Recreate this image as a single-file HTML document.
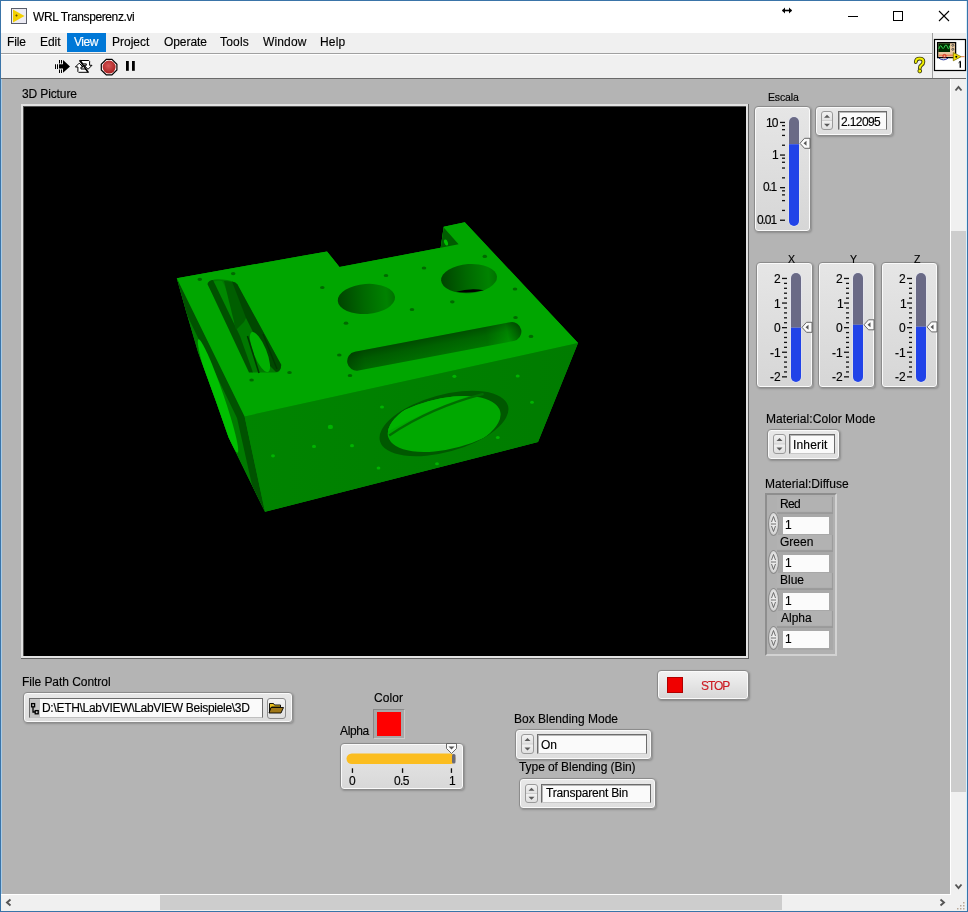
<!DOCTYPE html><html><head><meta charset="utf-8"><style>
*{margin:0;padding:0;box-sizing:border-box}
html,body{width:968px;height:912px;overflow:hidden;background:#fff}
body{position:relative;font-family:"Liberation Sans",sans-serif}
.t{position:absolute;white-space:pre;line-height:1;will-change:transform;-webkit-text-stroke:0.15px currentColor}
.a{position:absolute}
</style></head><body>
<div class="a" style="left:0;top:0;width:968px;height:912px;border:1px solid #3a74a8"></div>
<div class="a" style="left:1px;top:1px;width:966px;height:32px;background:#fff"></div>
<div class="a" style="left:1px;top:33px;width:931px;height:20px;background:#f0f0f0"></div>
<div class="a" style="left:1px;top:53px;width:931px;height:1px;background:#a0a0a0"></div>
<div class="a" style="left:1px;top:54px;width:931px;height:24px;background:#f0f0f0;border-top:1px solid #fff"></div>
<div class="a" style="left:933px;top:33px;width:34px;height:45px;background:#f0f0f0"></div>
<div class="a" style="left:932px;top:33px;width:1px;height:45px;background:#a0a0a0"></div>
<div class="a" style="left:1px;top:78px;width:966px;height:1px;background:#6a6a6a"></div>
<div class="a" style="left:1px;top:79px;width:949px;height:815px;background:#b4b4b4"></div>
<div class="a" style="left:950px;top:79px;width:1px;height:815px;background:#fff"></div>
<div class="a" style="left:951px;top:79px;width:16px;height:815px;background:#f0f0f0"></div>
<div class="a" style="left:951px;top:231px;width:15px;height:561px;background:#cdcdcd"></div>
<div class="a" style="left:1px;top:894px;width:966px;height:17px;background:#f0f0f0"></div>
<div class="a" style="left:160px;top:895px;width:622px;height:15px;background:#cdcdcd"></div>
<div class="a" style="left:1px;top:894px;width:950px;height:1px;background:#fff"></div>
<div class="a" style="left:1px;top:79px;width:1px;height:815px;background:#a8cce8"></div>
<div class="a" style="left:966px;top:1px;width:1px;height:910px;background:#d8f0fc"></div>
<div class="t" style="left:32.50px;top:10.64px;font-size:12px;letter-spacing:-0.382px;color:#000;">WRL Transperenz.vi</div>
<div class="a" style="left:67px;top:33px;width:39px;height:19px;background:#0078d7"></div>
<div class="t" style="left:7.40px;top:35.94px;font-size:12px;letter-spacing:-0.100px;color:#000;">File</div>
<div class="t" style="left:39.50px;top:35.94px;font-size:12px;letter-spacing:-0.033px;color:#000;">Edit</div>
<div class="t" style="left:74.00px;top:35.94px;font-size:12px;letter-spacing:-0.433px;color:#fff;">View</div>
<div class="t" style="left:112.40px;top:35.94px;font-size:12px;letter-spacing:0.000px;color:#000;">Project</div>
<div class="t" style="left:163.60px;top:35.94px;font-size:12px;letter-spacing:-0.067px;color:#000;">Operate</div>
<div class="t" style="left:220.30px;top:35.94px;font-size:12px;letter-spacing:0.200px;color:#000;">Tools</div>
<div class="t" style="left:263.20px;top:35.94px;font-size:12px;letter-spacing:0.140px;color:#000;">Window</div>
<div class="t" style="left:320.40px;top:35.94px;font-size:12px;letter-spacing:0.200px;color:#000;">Help</div>
<svg class="a" style="left:0;top:0" width="968" height="80" viewBox="0 0 968 80"><rect x="11.5" y="8.5" width="15" height="15" fill="#ecebf3" stroke="#5a5e6a"/><path d="M13 9.5 L24.5 16 L13 22.5 Z" fill="#f2d000"/><path d="M15.5 15.5h2M16.5 14.5v2" stroke="#6a4a00" stroke-width="1.2"/><path d="M782.5 10.5h9" stroke="#000" stroke-width="1.6"/><path d="M782 10.5l3-3v6z M792 10.5l-3-3v6z" fill="#000"/><path d="M848 16.5h10" stroke="#000" stroke-width="1"/><rect x="893.5" y="11.5" width="9" height="9" fill="none" stroke="#000"/><path d="M939 11l10 10M949 11l-10 10" stroke="#000" stroke-width="1.1"/><path d="M63 60 L70 66.4 L63 72.8 Z M59 64.2h4v4.3h-4z" fill="#000"/><path d="M59 60h1v3.5h-1zM61 60h1v3.5h-1zM59 69.5h1v3.5h-1zM61 69.5h1v3.5h-1zM55 64.2h1v4.8h-1zM57 64.2h1v4.8h-1z" fill="#000"/><g stroke="#000" stroke-width="1" fill="#fff" stroke-linejoin="miter"><path d="M80.5 60.5 L88.8 60.5 L89.6 61.3 L89.6 65.3 L92 65.3 L88 69.3 L84.2 65.3 L86.3 65.3 L86.3 63.9 L83 63.9 Z"/><path d="M87.8 72.3 L78.6 72.3 L77.9 71.6 L77.9 67 L75.4 67 L79.2 63.2 L83 67 L81 67 L81 69 L85.3 69 Z"/></g><path d="M79.5 60.2 L88.5 72.6" stroke="#000" stroke-width="1.5"/><defs><radialGradient id="ab" cx="45%" cy="40%" r="60%"><stop offset="0" stop-color="#d85858"/><stop offset="1" stop-color="#a82020"/></radialGradient></defs><path d="M106.3 59.3h5.6l5 5v5.6l-5 5h-5.6l-5-5v-5.6z" fill="#fff" stroke="#000" stroke-width="1.2"/><circle cx="109.1" cy="67.1" r="6.5" fill="url(#ab)"/><rect x="126" y="61" width="2.8" height="9.8" fill="#000"/><rect x="132" y="61" width="2.8" height="9.8" fill="#000"/><path d="M915.8 62 Q916 58.6 919.6 58.6 Q923.4 58.6 923.4 61.8 Q923.4 64 921.2 65.4 Q919.8 66.4 919.8 68.2" fill="none" stroke="#3a3a10" stroke-width="3.8" stroke-linecap="round"/><path d="M915.8 62 Q916 58.6 919.6 58.6 Q923.4 58.6 923.4 61.8 Q923.4 64 921.2 65.4 Q919.8 66.4 919.8 68.2" fill="none" stroke="#f2f000" stroke-width="2" stroke-linecap="round"/><circle cx="919.8" cy="71" r="1.9" fill="#f2f000" stroke="#3a3a10" stroke-width="0.9"/><rect x="934.5" y="39.5" width="31" height="31" fill="#fff" stroke="#000" stroke-width="1.2"/><rect x="937.6" y="42.6" width="18" height="15" fill="#e8c8a0" stroke="#000" stroke-width="1.3"/><rect x="938.3" y="43.3" width="11.7" height="8.7" fill="#002a00"/><path d="M938.8 49 Q940.3 43.5 941.8 47 Q943.3 50.5 944.8 46 Q946.3 43 947.8 48 Q948.8 50.5 949.8 45.5" fill="none" stroke="#30d050" stroke-width="1"/><circle cx="952.8" cy="45.3" r="1" fill="none" stroke="#333" stroke-width="0.8"/><circle cx="952.8" cy="49.3" r="1" fill="none" stroke="#333" stroke-width="0.8"/><path d="M939 55.2h14" stroke="#f07040" stroke-width="1.1"/><circle cx="944.5" cy="56" r="1.6" fill="none" stroke="#d02020" stroke-width="0.9"/><path d="M939 58.2 Q943.5 61.5 948 58.2" fill="none" stroke="#2030a0" stroke-width="1"/><path d="M953.3 52.6 L961.1 56.7 L953.3 60.8 Z" fill="#f4e000" stroke="#807000" stroke-width="0.8"/><circle cx="956.3" cy="56.7" r="1" fill="#000"/><path d="M961 56.7h3.5" stroke="#e07030" stroke-width="0.9"/><path d="M960.3 61.2v6.6" stroke="#000" stroke-width="1.4"/><path d="M958.6 62.8l1.7-1.6" stroke="#000" stroke-width="1"/></svg>
<svg class="a" style="left:0;top:80px" width="968" height="832" viewBox="0 80 968 832"><path d="M955.5 90.5 L958.5 87 L961.5 90.5" fill="none" stroke="#555" stroke-width="1.9"/><path d="M955.5 884.5 L958.5 888 L961.5 884.5" fill="none" stroke="#555" stroke-width="1.9"/><path d="M10.5 899.5 L7 902.5 L10.5 905.5" fill="none" stroke="#555" stroke-width="1.9"/><path d="M940.5 899.5 L944 902.5 L940.5 905.5" fill="none" stroke="#555" stroke-width="1.9"/><g fill="#b8a898"><rect x="963" y="902" width="1.5" height="1.5"/><rect x="960" y="905" width="1.5" height="1.5"/><rect x="963" y="905" width="1.5" height="1.5"/><rect x="957" y="908" width="1.5" height="1.5"/><rect x="960" y="908" width="1.5" height="1.5"/><rect x="963" y="908" width="1.5" height="1.5"/></g></svg>
<div class="t" style="left:21.90px;top:87.54px;font-size:12px;letter-spacing:-0.122px;color:#000;">3D Picture</div>
<div class="a" style="left:21px;top:104px;width:728px;height:555px;background:#e2e2e2;border-right:1px solid #606060;border-bottom:1px solid #606060"></div>
<div class="a" style="left:23px;top:106px;width:723px;height:550px;background:#000;border-left:1px solid #505050;border-top:1px solid #505050"></div>
<svg class="a" style="left:0;top:0" width="968" height="912" viewBox="0 0 968 912"><defs><linearGradient id="hg" x1="0" y1="0" x2="1" y2="0"><stop offset="0" stop-color="#004400"/><stop offset="0.45" stop-color="#006800"/><stop offset="0.85" stop-color="#008200"/><stop offset="1" stop-color="#007000"/></linearGradient><linearGradient id="sg" x1="0" y1="0" x2="1" y2="0"><stop offset="0" stop-color="#004c00"/><stop offset="0.1" stop-color="#006000"/><stop offset="0.8" stop-color="#006c00"/><stop offset="0.92" stop-color="#008800"/><stop offset="1" stop-color="#005000"/></linearGradient><linearGradient id="sv" x1="0" y1="0" x2="0" y2="1"><stop offset="0" stop-color="#000" stop-opacity="0.25"/><stop offset="0.45" stop-color="#000" stop-opacity="0.05"/><stop offset="1" stop-color="#00ff00" stop-opacity="0.06"/></linearGradient><linearGradient id="ffg" x1="0" y1="0" x2="1" y2="0"><stop offset="0" stop-color="#008400"/><stop offset="1" stop-color="#007c00"/></linearGradient><clipPath id="lf"><path d="M176.8 278.3 L244.6 416.4 L265 511.8 L228.6 437.6 L216 401.6 L198 352 L186 311 Z"/></clipPath><clipPath id="fho"><ellipse cx="0" cy="0" rx="66.4" ry="28.6"/></clipPath><clipPath id="fh2"><ellipse cx="-9" cy="3" rx="66.4" ry="28.6"/></clipPath><clipPath id="fh3"><ellipse cx="9" cy="-2" rx="66.4" ry="28.6"/></clipPath></defs><path d="M176.8 278.3 L327 251.4 L339.5 267 L440.7 247.8 L443.7 226.7 L464.8 222.3 L578 343 L538 442 L265 511.8 L228.6 437.6 L216 401.6 L198 352 L186 311 Z" fill="#009800"/><path d="M176.8 278.3 L327 251.4 L339.5 267 L440.7 247.8 L443.7 226.7 L464.8 222.3 L578 343 L244.6 416.4 Z" fill="#00a600"/><path d="M443.7 227.5 L458.6 244.2 L440.7 247.8 Z" fill="#005c00"/><ellipse cx="446" cy="242.5" rx="1.8" ry="3.2" fill="#00c000" transform="rotate(-20 446 242.5)"/><path d="M244.6 416.4 L578 343 L538 442 L265 511.8 Z" fill="url(#ffg)"/><g clip-path="url(#lf)"><rect x="170" y="270" width="100" height="250" fill="#007a00"/><path d="M176.8 278.3 L244.6 416.4 L265 511.8 L258 511.8 L237 418 L169 278 Z" fill="#005200"/><ellipse cx="218" cy="396" rx="5.5" ry="60" fill="#00c000" transform="rotate(-19 218 396)"/></g><ellipse cx="366.4" cy="299" rx="28.7" ry="15" fill="url(#hg)" transform="rotate(-4 366 299)"/><ellipse cx="469" cy="278.6" rx="28" ry="14.6" fill="url(#hg)" transform="rotate(-4 469 278)"/><path d="M456 291.8 Q470 287.5 484 290.2 Q470 293.8 456 291.8Z" fill="#000"/><g transform="translate(434.3 346.4) rotate(-10.8)"><rect x="-88.5" y="-9.5" width="177" height="19" rx="9.5" fill="url(#sg)"/><rect x="-88.5" y="-9.5" width="177" height="19" rx="9.5" fill="url(#sv)"/></g><path d="M207.5 284 Q211 278 222 279.5 Q233 280 237 284.5 L281.2 364.7 Q281 373 274 372.6 L252.9 372.6 Z" fill="#007800"/><path d="M210 284 Q214 280 222 281 L238 312 L232 328 Z" fill="#008800"/><path d="M207.5 284 Q209 280 213 280 L240 336 L253 372.6 L249 372.6 Z" fill="#005000"/><path d="M224 281 Q233 281 237 284.5 L250 310 L244 322 L236 330 Z" fill="#005e00"/><path d="M232 281.5 Q236 282 237.5 284.5 L281.2 364.7 Q281 372 276 372 L270 366 L246 318 Z" fill="#004800"/><ellipse cx="260" cy="352" rx="6.5" ry="21.5" fill="#00b000" transform="rotate(-22 260 352)"/><path d="M247.5 336 L259 373" stroke="#003800" stroke-width="1.6"/><path d="M263 334 L277 369" stroke="#003800" stroke-width="1.4"/><ellipse cx="386" cy="275.5" rx="2.3" ry="1.6" fill="#006a00"/><ellipse cx="424" cy="268" rx="2.3" ry="1.6" fill="#006a00"/><ellipse cx="484.8" cy="256.4" rx="2.3" ry="1.6" fill="#006a00"/><ellipse cx="412" cy="309.5" rx="2.3" ry="1.6" fill="#006a00"/><ellipse cx="452.3" cy="301.8" rx="2.3" ry="1.6" fill="#006a00"/><ellipse cx="515" cy="289" rx="2.3" ry="1.6" fill="#006a00"/><ellipse cx="346" cy="323.2" rx="2.3" ry="1.6" fill="#006a00"/><ellipse cx="515.5" cy="317.5" rx="2.3" ry="1.6" fill="#006a00"/><ellipse cx="339.3" cy="355" rx="2.3" ry="1.6" fill="#006a00"/><ellipse cx="531" cy="336.4" rx="2.3" ry="1.6" fill="#006a00"/><ellipse cx="350" cy="375.5" rx="2.3" ry="1.6" fill="#006a00"/><ellipse cx="322.3" cy="287.5" rx="2.3" ry="1.6" fill="#006a00"/><ellipse cx="199.8" cy="279.3" rx="2.3" ry="1.6" fill="#006a00"/><ellipse cx="233.2" cy="273.6" rx="2.3" ry="1.6" fill="#006a00"/><ellipse cx="289.5" cy="372.5" rx="2.3" ry="1.6" fill="#006a00"/><ellipse cx="251.6" cy="380" rx="2.3" ry="1.6" fill="#006a00"/><ellipse cx="382" cy="407" rx="2.0" ry="1.6" fill="#00b400"/><ellipse cx="330.4" cy="426.9" rx="2.6" ry="2.2" fill="#00b400"/><ellipse cx="314" cy="446.4" rx="2.0" ry="1.6" fill="#00b400"/><ellipse cx="352" cy="445.7" rx="2.0" ry="1.6" fill="#00b400"/><ellipse cx="273" cy="455.8" rx="2.0" ry="1.6" fill="#00b400"/><ellipse cx="378.5" cy="468" rx="1.9" ry="1.5" fill="#00b400"/><ellipse cx="437" cy="463.8" rx="1.9" ry="1.5" fill="#00b400"/><ellipse cx="454.4" cy="376.3" rx="2.0" ry="1.6" fill="#00b400"/><ellipse cx="517.7" cy="376" rx="2.0" ry="1.6" fill="#00b400"/><ellipse cx="532" cy="402.3" rx="1.9" ry="1.5" fill="#00b400"/><ellipse cx="497.8" cy="437.4" rx="1.9" ry="1.5" fill="#00b400"/><g transform="translate(444 423.5) rotate(-15.4)"><ellipse cx="0" cy="0" rx="66.4" ry="28.6" fill="#005800"/><g clip-path="url(#fho)"><g clip-path="url(#fh2)"><ellipse cx="9" cy="-2" rx="66.4" ry="28.6" fill="#00a800"/></g></g><g clip-path="url(#fho)"><g clip-path="url(#fh2)"><g clip-path="url(#fh3)"><path d="M-70 -4 Q-8 -19 70 -20 L70 -40 L-70 -40 Z" fill="#00b200" transform="translate(8 -2)"/></g></g></g><path d="M-56 -3 Q-8 -19 46 -18" fill="none" stroke="#006e00" stroke-width="2.4"/></g></svg>
<div class="a" style="left:754px;top:106px;width:57px;height:126px;border:1px solid #8c8c8c;border-radius:4px;background:linear-gradient(#e6e6e6,#d6d6d6);box-shadow:inset 0 0 0 1px #fafafa,1px 1px 2px rgba(0,0,0,0.22)"></div>
<svg class="a" style="left:0;top:0" width="968" height="912" viewBox="0 0 968 912"><rect x="788.5" y="116.5" width="11" height="110" rx="5.5" fill="#e8ecff" opacity="0.7"/><clipPath id="c789"><rect x="789" y="117" width="10" height="109" rx="5"/></clipPath><g clip-path="url(#c789)"><rect x="789" y="117" width="10" height="27.19999999999999" fill="#6a6a86"/><rect x="789" y="144.2" width="10" height="81.80000000000001" fill="#2143e8"/></g><rect x="780" y="121.80" width="5" height="1.3" fill="#111"/><rect x="782" y="124.96" width="3" height="1.3" fill="#111"/><rect x="782" y="129.03" width="3" height="1.3" fill="#111"/><rect x="782" y="134.77" width="3" height="1.3" fill="#111"/><rect x="782" y="144.59" width="3" height="1.3" fill="#111"/><rect x="780" y="154.40" width="5" height="1.3" fill="#111"/><rect x="782" y="157.56" width="3" height="1.3" fill="#111"/><rect x="782" y="161.63" width="3" height="1.3" fill="#111"/><rect x="782" y="167.37" width="3" height="1.3" fill="#111"/><rect x="782" y="177.19" width="3" height="1.3" fill="#111"/><rect x="780" y="187.00" width="5" height="1.3" fill="#111"/><rect x="782" y="190.16" width="3" height="1.3" fill="#111"/><rect x="782" y="194.23" width="3" height="1.3" fill="#111"/><rect x="782" y="199.97" width="3" height="1.3" fill="#111"/><rect x="782" y="209.79" width="3" height="1.3" fill="#111"/><rect x="780" y="219.60" width="5" height="1.3" fill="#111"/><path d="M800 143.3 L804.5 138.3 L810 138.3 L810 148.3 L804.5 148.3 Z" fill="#fbfbfb" stroke="#5a5a5a" stroke-width="0.9"/><path d="M803.5 143.3 L806.5 140.8 L806.5 145.8 Z" fill="#555"/></svg>
<div class="t" style="left:765.50px;top:116.54px;font-size:12px;letter-spacing:-0.900px;color:#000;">10</div>
<div class="t" style="left:772.30px;top:149.24px;font-size:12px;letter-spacing:0.000px;color:#000;">1</div>
<div class="t" style="left:762.90px;top:181.34px;font-size:12px;letter-spacing:-1.200px;color:#000;">0.1</div>
<div class="t" style="left:757.00px;top:213.84px;font-size:12px;letter-spacing:-1.067px;color:#000;">0.01</div>
<div class="t" style="left:767.70px;top:91.91px;font-size:10.5px;letter-spacing:-0.160px;color:#000;">Escala</div>
<div class="a" style="left:815px;top:106px;width:78px;height:30px;border:1px solid #8c8c8c;border-radius:4px;background:linear-gradient(#e8e8e8,#dedede);box-shadow:inset 0 0 0 1px #fafafa,1px 1px 2px rgba(0,0,0,0.22)"></div>
<div class="a" style="left:821px;top:111px;width:12px;height:19px;border:1px solid #9a9a9a;border-radius:3px;background:linear-gradient(#f2f2f2,#e2e2e2 45%,#cfcfcf 50%,#f0f0f0 55%,#e0e0e0)"></div>
<svg class="a" style="left:0;top:0" width="968" height="912"><path d="M824.0 117.75 L827.0 114.75 L830.0 117.75 Z M824.0 123.75 L827.0 126.75 L830.0 123.75 Z" fill="#5a5a5a"/></svg>
<div class="a" style="left:838px;top:111px;width:49px;height:19px;border:1px solid #6c6c6c;border-bottom-color:#c8c8c8;background:#fafafa;box-shadow:inset 1px 1px 0 #b8b8b8"></div>
<div class="t" style="left:841.40px;top:116.14px;font-size:12px;letter-spacing:-0.617px;color:#000;">2.12095</div>
<div class="a" style="left:756px;top:262px;width:57px;height:126px;border:1px solid #8c8c8c;border-radius:4px;background:linear-gradient(#e6e6e6,#d6d6d6);box-shadow:inset 0 0 0 1px #fafafa,1px 1px 2px rgba(0,0,0,0.22)"></div>
<svg class="a" style="left:0;top:0" width="968" height="912" viewBox="0 0 968 912"><rect x="790.5" y="272.5" width="11" height="110" rx="5.5" fill="#e8ecff" opacity="0.7"/><clipPath id="c791"><rect x="791" y="273" width="10" height="109" rx="5"/></clipPath><g clip-path="url(#c791)"><rect x="791" y="273" width="10" height="54.69999999999999" fill="#6a6a86"/><rect x="791" y="327.7" width="10" height="54.30000000000001" fill="#2143e8"/></g><rect x="782" y="277.80" width="5" height="1.3" fill="#111"/><rect x="784" y="282.72" width="3" height="1.3" fill="#111"/><rect x="784" y="287.64" width="3" height="1.3" fill="#111"/><rect x="784" y="292.56" width="3" height="1.3" fill="#111"/><rect x="784" y="297.48" width="3" height="1.3" fill="#111"/><rect x="782" y="302.40" width="5" height="1.3" fill="#111"/><rect x="784" y="307.32" width="3" height="1.3" fill="#111"/><rect x="784" y="312.24" width="3" height="1.3" fill="#111"/><rect x="784" y="317.16" width="3" height="1.3" fill="#111"/><rect x="784" y="322.08" width="3" height="1.3" fill="#111"/><rect x="782" y="327.00" width="5" height="1.3" fill="#111"/><rect x="784" y="331.92" width="3" height="1.3" fill="#111"/><rect x="784" y="336.84" width="3" height="1.3" fill="#111"/><rect x="784" y="341.76" width="3" height="1.3" fill="#111"/><rect x="784" y="346.68" width="3" height="1.3" fill="#111"/><rect x="782" y="351.60" width="5" height="1.3" fill="#111"/><rect x="784" y="356.52" width="3" height="1.3" fill="#111"/><rect x="784" y="361.44" width="3" height="1.3" fill="#111"/><rect x="784" y="366.36" width="3" height="1.3" fill="#111"/><rect x="784" y="371.28" width="3" height="1.3" fill="#111"/><rect x="782" y="376.20" width="5" height="1.3" fill="#111"/><path d="M802 327.3 L806.5 322.3 L812 322.3 L812 332.3 L806.5 332.3 Z" fill="#fbfbfb" stroke="#5a5a5a" stroke-width="0.9"/><path d="M805.5 327.3 L808.5 324.8 L808.5 329.8 Z" fill="#555"/></svg>
<div class="t" style="left:774.00px;top:273.24px;font-size:12px;letter-spacing:0.000px;color:#000;">2</div>
<div class="t" style="left:774.30px;top:297.84px;font-size:12px;letter-spacing:0.000px;color:#000;">1</div>
<div class="t" style="left:774.00px;top:322.44px;font-size:12px;letter-spacing:0.000px;color:#000;">0</div>
<div class="t" style="left:769.50px;top:347.04px;font-size:12px;letter-spacing:0.000px;color:#000;">-1</div>
<div class="t" style="left:769.50px;top:371.44px;font-size:12px;letter-spacing:0.000px;color:#000;">-2</div>
<div class="t" style="left:788.20px;top:253.61px;font-size:10.5px;letter-spacing:0.000px;color:#000;">X</div>
<div class="a" style="left:818px;top:262px;width:57px;height:126px;border:1px solid #8c8c8c;border-radius:4px;background:linear-gradient(#e6e6e6,#d6d6d6);box-shadow:inset 0 0 0 1px #fafafa,1px 1px 2px rgba(0,0,0,0.22)"></div>
<svg class="a" style="left:0;top:0" width="968" height="912" viewBox="0 0 968 912"><rect x="852.5" y="272.5" width="11" height="110" rx="5.5" fill="#e8ecff" opacity="0.7"/><clipPath id="c853"><rect x="853" y="273" width="10" height="109" rx="5"/></clipPath><g clip-path="url(#c853)"><rect x="853" y="273" width="10" height="51.80000000000001" fill="#6a6a86"/><rect x="853" y="324.8" width="10" height="57.19999999999999" fill="#2143e8"/></g><rect x="844" y="277.80" width="5" height="1.3" fill="#111"/><rect x="846" y="282.72" width="3" height="1.3" fill="#111"/><rect x="846" y="287.64" width="3" height="1.3" fill="#111"/><rect x="846" y="292.56" width="3" height="1.3" fill="#111"/><rect x="846" y="297.48" width="3" height="1.3" fill="#111"/><rect x="844" y="302.40" width="5" height="1.3" fill="#111"/><rect x="846" y="307.32" width="3" height="1.3" fill="#111"/><rect x="846" y="312.24" width="3" height="1.3" fill="#111"/><rect x="846" y="317.16" width="3" height="1.3" fill="#111"/><rect x="846" y="322.08" width="3" height="1.3" fill="#111"/><rect x="844" y="327.00" width="5" height="1.3" fill="#111"/><rect x="846" y="331.92" width="3" height="1.3" fill="#111"/><rect x="846" y="336.84" width="3" height="1.3" fill="#111"/><rect x="846" y="341.76" width="3" height="1.3" fill="#111"/><rect x="846" y="346.68" width="3" height="1.3" fill="#111"/><rect x="844" y="351.60" width="5" height="1.3" fill="#111"/><rect x="846" y="356.52" width="3" height="1.3" fill="#111"/><rect x="846" y="361.44" width="3" height="1.3" fill="#111"/><rect x="846" y="366.36" width="3" height="1.3" fill="#111"/><rect x="846" y="371.28" width="3" height="1.3" fill="#111"/><rect x="844" y="376.20" width="5" height="1.3" fill="#111"/><path d="M864 324.8 L868.5 319.8 L874 319.8 L874 329.8 L868.5 329.8 Z" fill="#fbfbfb" stroke="#5a5a5a" stroke-width="0.9"/><path d="M867.5 324.8 L870.5 322.3 L870.5 327.3 Z" fill="#555"/></svg>
<div class="t" style="left:836.30px;top:273.24px;font-size:12px;letter-spacing:0.000px;color:#000;">2</div>
<div class="t" style="left:836.60px;top:297.84px;font-size:12px;letter-spacing:0.000px;color:#000;">1</div>
<div class="t" style="left:836.30px;top:322.44px;font-size:12px;letter-spacing:0.000px;color:#000;">0</div>
<div class="t" style="left:831.80px;top:347.04px;font-size:12px;letter-spacing:0.000px;color:#000;">-1</div>
<div class="t" style="left:831.80px;top:371.44px;font-size:12px;letter-spacing:0.000px;color:#000;">-2</div>
<div class="t" style="left:849.80px;top:253.61px;font-size:10.5px;letter-spacing:0.000px;color:#000;">Y</div>
<div class="a" style="left:881px;top:262px;width:57px;height:126px;border:1px solid #8c8c8c;border-radius:4px;background:linear-gradient(#e6e6e6,#d6d6d6);box-shadow:inset 0 0 0 1px #fafafa,1px 1px 2px rgba(0,0,0,0.22)"></div>
<svg class="a" style="left:0;top:0" width="968" height="912" viewBox="0 0 968 912"><rect x="915.5" y="272.5" width="11" height="110" rx="5.5" fill="#e8ecff" opacity="0.7"/><clipPath id="c916"><rect x="916" y="273" width="10" height="109" rx="5"/></clipPath><g clip-path="url(#c916)"><rect x="916" y="273" width="10" height="53.69999999999999" fill="#6a6a86"/><rect x="916" y="326.7" width="10" height="55.30000000000001" fill="#2143e8"/></g><rect x="907" y="277.80" width="5" height="1.3" fill="#111"/><rect x="909" y="282.72" width="3" height="1.3" fill="#111"/><rect x="909" y="287.64" width="3" height="1.3" fill="#111"/><rect x="909" y="292.56" width="3" height="1.3" fill="#111"/><rect x="909" y="297.48" width="3" height="1.3" fill="#111"/><rect x="907" y="302.40" width="5" height="1.3" fill="#111"/><rect x="909" y="307.32" width="3" height="1.3" fill="#111"/><rect x="909" y="312.24" width="3" height="1.3" fill="#111"/><rect x="909" y="317.16" width="3" height="1.3" fill="#111"/><rect x="909" y="322.08" width="3" height="1.3" fill="#111"/><rect x="907" y="327.00" width="5" height="1.3" fill="#111"/><rect x="909" y="331.92" width="3" height="1.3" fill="#111"/><rect x="909" y="336.84" width="3" height="1.3" fill="#111"/><rect x="909" y="341.76" width="3" height="1.3" fill="#111"/><rect x="909" y="346.68" width="3" height="1.3" fill="#111"/><rect x="907" y="351.60" width="5" height="1.3" fill="#111"/><rect x="909" y="356.52" width="3" height="1.3" fill="#111"/><rect x="909" y="361.44" width="3" height="1.3" fill="#111"/><rect x="909" y="366.36" width="3" height="1.3" fill="#111"/><rect x="909" y="371.28" width="3" height="1.3" fill="#111"/><rect x="907" y="376.20" width="5" height="1.3" fill="#111"/><path d="M927 326.9 L931.5 321.9 L937 321.9 L937 331.9 L931.5 331.9 Z" fill="#fbfbfb" stroke="#5a5a5a" stroke-width="0.9"/><path d="M930.5 326.9 L933.5 324.4 L933.5 329.4 Z" fill="#555"/></svg>
<div class="t" style="left:899.20px;top:273.24px;font-size:12px;letter-spacing:0.000px;color:#000;">2</div>
<div class="t" style="left:899.50px;top:297.84px;font-size:12px;letter-spacing:0.000px;color:#000;">1</div>
<div class="t" style="left:899.20px;top:322.44px;font-size:12px;letter-spacing:0.000px;color:#000;">0</div>
<div class="t" style="left:894.70px;top:347.04px;font-size:12px;letter-spacing:0.000px;color:#000;">-1</div>
<div class="t" style="left:894.70px;top:371.44px;font-size:12px;letter-spacing:0.000px;color:#000;">-2</div>
<div class="t" style="left:913.50px;top:253.61px;font-size:10.5px;letter-spacing:0.000px;color:#000;">Z</div>
<div class="t" style="left:765.80px;top:412.54px;font-size:12px;letter-spacing:0.072px;color:#000;">Material:Color Mode</div>
<div class="a" style="left:767px;top:429px;width:73px;height:31px;border:1px solid #8c8c8c;border-radius:4px;background:linear-gradient(#e8e8e8,#dedede);box-shadow:inset 0 0 0 1px #fafafa,1px 1px 2px rgba(0,0,0,0.22)"></div>
<div class="a" style="left:773px;top:434px;width:13px;height:20px;border:1px solid #9a9a9a;border-radius:3px;background:linear-gradient(#f2f2f2,#e2e2e2 45%,#cfcfcf 50%,#f0f0f0 55%,#e0e0e0)"></div>
<svg class="a" style="left:0;top:0" width="968" height="912"><path d="M776.5 441.0 L779.5 438.0 L782.5 441.0 Z M776.5 447.5 L779.5 450.5 L782.5 447.5 Z" fill="#5a5a5a"/></svg>
<div class="a" style="left:789px;top:434px;width:46px;height:20px;border:1px solid #6c6c6c;border-bottom-color:#c8c8c8;background:#fafafa;box-shadow:inset 1px 1px 0 #b8b8b8"></div>
<div class="t" style="left:792.60px;top:438.84px;font-size:12px;letter-spacing:0.183px;color:#000;">Inherit</div>
<div class="t" style="left:764.70px;top:477.64px;font-size:12px;letter-spacing:0.033px;color:#000;">Material:Diffuse</div>
<div class="a" style="left:765px;top:493px;width:72px;height:163px;background:#b0b0b0;border:2px solid;border-color:#8e8e8e #d2d2d2 #d2d2d2 #8e8e8e"></div>
<div class="a" style="left:777px;top:497px;width:56px;height:17px;background:#b2b2b2;box-shadow:inset -1px -2px 1px #9a9a9a"></div>
<div class="a" style="left:778px;top:514px;width:55px;height:22px;background:#a8a8a8"></div>
<div class="a" style="left:783px;top:517px;width:46px;height:17px;background:#fbfbfb"></div>
<div class="a" style="left:768px;top:512px;width:11px;height:24px;border-radius:50%;border:1px solid #8c8c8c;background:radial-gradient(ellipse at 55% 45%,#f4f4f4,#d8d8d8 60%,#a8a8a8);"></div>
<svg class="a" style="left:0;top:0" width="968" height="912"><path d="M771.5 522 L773.5 516.5 L775.5 522 M771 524 h5 M771.5 526 L773.5 531.5 L775.5 526" stroke="#606060" stroke-width="0.9" fill="none"/></svg>
<div class="t" style="left:779.50px;top:498.24px;font-size:12px;letter-spacing:-0.700px;color:#000;">Red</div>
<div class="t" style="left:784.80px;top:519.24px;font-size:12px;letter-spacing:0.000px;color:#000;">1</div>
<div class="a" style="left:777px;top:535px;width:56px;height:17px;background:#b2b2b2;box-shadow:inset -1px -2px 1px #9a9a9a"></div>
<div class="a" style="left:778px;top:552px;width:55px;height:22px;background:#a8a8a8"></div>
<div class="a" style="left:783px;top:555px;width:46px;height:17px;background:#fbfbfb"></div>
<div class="a" style="left:768px;top:550px;width:11px;height:24px;border-radius:50%;border:1px solid #8c8c8c;background:radial-gradient(ellipse at 55% 45%,#f4f4f4,#d8d8d8 60%,#a8a8a8);"></div>
<svg class="a" style="left:0;top:0" width="968" height="912"><path d="M771.5 560 L773.5 554.5 L775.5 560 M771 562 h5 M771.5 564 L773.5 569.5 L775.5 564" stroke="#606060" stroke-width="0.9" fill="none"/></svg>
<div class="t" style="left:779.90px;top:536.24px;font-size:12px;letter-spacing:0.000px;color:#000;">Green</div>
<div class="t" style="left:784.80px;top:557.24px;font-size:12px;letter-spacing:0.000px;color:#000;">1</div>
<div class="a" style="left:777px;top:573px;width:56px;height:17px;background:#b2b2b2;box-shadow:inset -1px -2px 1px #9a9a9a"></div>
<div class="a" style="left:778px;top:590px;width:55px;height:22px;background:#a8a8a8"></div>
<div class="a" style="left:783px;top:593px;width:46px;height:17px;background:#fbfbfb"></div>
<div class="a" style="left:768px;top:588px;width:11px;height:24px;border-radius:50%;border:1px solid #8c8c8c;background:radial-gradient(ellipse at 55% 45%,#f4f4f4,#d8d8d8 60%,#a8a8a8);"></div>
<svg class="a" style="left:0;top:0" width="968" height="912"><path d="M771.5 598 L773.5 592.5 L775.5 598 M771 600 h5 M771.5 602 L773.5 607.5 L775.5 602" stroke="#606060" stroke-width="0.9" fill="none"/></svg>
<div class="t" style="left:779.50px;top:574.24px;font-size:12px;letter-spacing:0.000px;color:#000;">Blue</div>
<div class="t" style="left:784.80px;top:595.24px;font-size:12px;letter-spacing:0.000px;color:#000;">1</div>
<div class="a" style="left:777px;top:611px;width:56px;height:17px;background:#b2b2b2;box-shadow:inset -1px -2px 1px #9a9a9a"></div>
<div class="a" style="left:778px;top:628px;width:55px;height:22px;background:#a8a8a8"></div>
<div class="a" style="left:783px;top:631px;width:46px;height:17px;background:#fbfbfb"></div>
<div class="a" style="left:768px;top:626px;width:11px;height:24px;border-radius:50%;border:1px solid #8c8c8c;background:radial-gradient(ellipse at 55% 45%,#f4f4f4,#d8d8d8 60%,#a8a8a8);"></div>
<svg class="a" style="left:0;top:0" width="968" height="912"><path d="M771.5 636 L773.5 630.5 L775.5 636 M771 638 h5 M771.5 640 L773.5 645.5 L775.5 640" stroke="#606060" stroke-width="0.9" fill="none"/></svg>
<div class="t" style="left:780.50px;top:612.24px;font-size:12px;letter-spacing:0.000px;color:#000;">Alpha</div>
<div class="t" style="left:784.80px;top:633.24px;font-size:12px;letter-spacing:0.000px;color:#000;">1</div>
<div class="t" style="left:21.70px;top:675.84px;font-size:12px;letter-spacing:-0.050px;color:#000;">File Path Control</div>
<div class="a" style="left:23px;top:692px;width:270px;height:31px;border:1px solid #8c8c8c;border-radius:4px;background:linear-gradient(#e8e8e8,#dcdcdc);box-shadow:inset 0 0 0 1px #fafafa,1px 1px 2px rgba(0,0,0,0.22)"></div>
<div class="a" style="left:29px;top:698px;width:234px;height:20px;border:1px solid #6c6c6c;border-bottom-color:#c0c0c0;background:#fafafa"></div>
<div class="a" style="left:30px;top:699px;width:10px;height:18px;background:#c4c4c4"></div>
<svg class="a" style="left:0;top:0" width="968" height="912"><g fill="none" stroke="#000" stroke-width="1.3"><rect x="31.6" y="703.6" width="3" height="3.2"/><rect x="35.2" y="710.6" width="3" height="3.2"/><path d="M33 707v5h2.2"/></g></svg>
<div class="t" style="left:41.70px;top:702.44px;font-size:12px;letter-spacing:-0.300px;color:#000;">D:\ETH\LabVIEW\LabVIEW Beispiele\3D</div>
<div class="a" style="left:267px;top:698px;width:19px;height:21px;border:1px solid #8c8c8c;border-radius:3px;background:linear-gradient(#f4f4f4,#dedede)"></div>
<svg class="a" style="left:0;top:0" width="968" height="912"><path d="M269.5 703.5h4l1 1.5h6v2h-9l-2 5.5z" fill="#e8c020" stroke="#000" stroke-width="0.9"/><path d="M271 707.5h12.5l-2.5 5.5h-12z" fill="#a07818" stroke="#000" stroke-width="0.9"/></svg>
<div class="t" style="left:374.10px;top:691.54px;font-size:12px;letter-spacing:0.100px;color:#000;">Color</div>
<div class="a" style="left:373px;top:709px;width:32px;height:30px;background:#a8a8a8;border:1px solid;border-color:#8a8a8a #cacaca #cacaca #8a8a8a"></div>
<div class="a" style="left:377px;top:712px;width:24px;height:24px;background:#ff0000"></div>
<div class="t" style="left:339.90px;top:725.34px;font-size:12px;letter-spacing:-0.350px;color:#000;">Alpha</div>
<div class="a" style="left:340px;top:743px;width:124px;height:47px;border:1px solid #8c8c8c;border-radius:4px;background:linear-gradient(#e8e8e8,#d8d8d8);box-shadow:inset 0 0 0 1px #fafafa,1px 1px 2px rgba(0,0,0,0.22)"></div>
<svg class="a" style="left:0;top:0" width="968" height="912"><rect x="346.5" y="753.5" width="109" height="10.5" rx="5.25" fill="#fbbd1f"/><rect x="452" y="754" width="3.5" height="9.5" rx="1.5" fill="#6a6a78"/><path d="M446.5 743.5h10v5l-5 5l-5-5z" fill="#fbfbfb" stroke="#5a5a5a" stroke-width="0.9"/><path d="M448.5 746.5h6l-3 3z" fill="#555"/><rect x="351.8" y="768.3" width="1.3" height="4.6" fill="#111"/><rect x="401.9" y="768.3" width="1.3" height="4.6" fill="#111"/><rect x="450.8" y="768.3" width="1.3" height="4.6" fill="#111"/></svg>
<div class="t" style="left:348.60px;top:774.54px;font-size:12px;letter-spacing:0.000px;color:#000;">0</div>
<div class="t" style="left:393.90px;top:774.54px;font-size:12px;letter-spacing:-0.600px;color:#000;">0.5</div>
<div class="t" style="left:448.50px;top:774.54px;font-size:12px;letter-spacing:0.000px;color:#000;">1</div>
<div class="a" style="left:657px;top:670px;width:92px;height:30px;border:1px solid #8a8a8a;border-radius:4px;background:linear-gradient(#f2f2f2,#e6e6e6 45%,#d6d6d6);box-shadow:inset 0 0 0 1px #fafafa,1px 1px 2px rgba(0,0,0,0.25)"></div>
<div class="a" style="left:667px;top:677px;width:16px;height:16px;background:#f00000;border:1px solid #b00000"></div>
<div class="t" style="left:700.50px;top:679.54px;font-size:12px;letter-spacing:-1.067px;color:#cc1a22;">STOP</div>
<div class="t" style="left:513.60px;top:712.74px;font-size:12px;letter-spacing:-0.006px;color:#000;">Box Blending Mode</div>
<div class="a" style="left:515px;top:729px;width:137px;height:31px;border:1px solid #8c8c8c;border-radius:4px;background:linear-gradient(#e8e8e8,#dedede);box-shadow:inset 0 0 0 1px #fafafa,1px 1px 2px rgba(0,0,0,0.22)"></div>
<div class="a" style="left:521px;top:734px;width:13px;height:20px;border:1px solid #9a9a9a;border-radius:3px;background:linear-gradient(#f2f2f2,#e2e2e2 45%,#cfcfcf 50%,#f0f0f0 55%,#e0e0e0)"></div>
<svg class="a" style="left:0;top:0" width="968" height="912"><path d="M524.5 741.0 L527.5 738.0 L530.5 741.0 Z M524.5 747.5 L527.5 750.5 L530.5 747.5 Z" fill="#5a5a5a"/></svg>
<div class="a" style="left:537px;top:734px;width:110px;height:20px;border:1px solid #6c6c6c;border-bottom-color:#c8c8c8;background:#fafafa;box-shadow:inset 1px 1px 0 #b8b8b8"></div>
<div class="t" style="left:541.40px;top:738.64px;font-size:12px;letter-spacing:-0.200px;color:#000;">On</div>
<div class="t" style="left:519.40px;top:760.94px;font-size:12px;letter-spacing:-0.071px;color:#000;">Type of Blending (Bin)</div>
<div class="a" style="left:519px;top:778px;width:137px;height:31px;border:1px solid #8c8c8c;border-radius:4px;background:linear-gradient(#e8e8e8,#dedede);box-shadow:inset 0 0 0 1px #fafafa,1px 1px 2px rgba(0,0,0,0.22)"></div>
<div class="a" style="left:525px;top:784px;width:13px;height:19px;border:1px solid #9a9a9a;border-radius:3px;background:linear-gradient(#f2f2f2,#e2e2e2 45%,#cfcfcf 50%,#f0f0f0 55%,#e0e0e0)"></div>
<svg class="a" style="left:0;top:0" width="968" height="912"><path d="M528.5 790.75 L531.5 787.75 L534.5 790.75 Z M528.5 796.75 L531.5 799.75 L534.5 796.75 Z" fill="#5a5a5a"/></svg>
<div class="a" style="left:541px;top:784px;width:110px;height:19px;border:1px solid #6c6c6c;border-bottom-color:#c8c8c8;background:#fafafa;box-shadow:inset 1px 1px 0 #b8b8b8"></div>
<div class="t" style="left:545.80px;top:787.44px;font-size:12px;letter-spacing:-0.193px;color:#000;">Transparent Bin</div>
</body></html>
